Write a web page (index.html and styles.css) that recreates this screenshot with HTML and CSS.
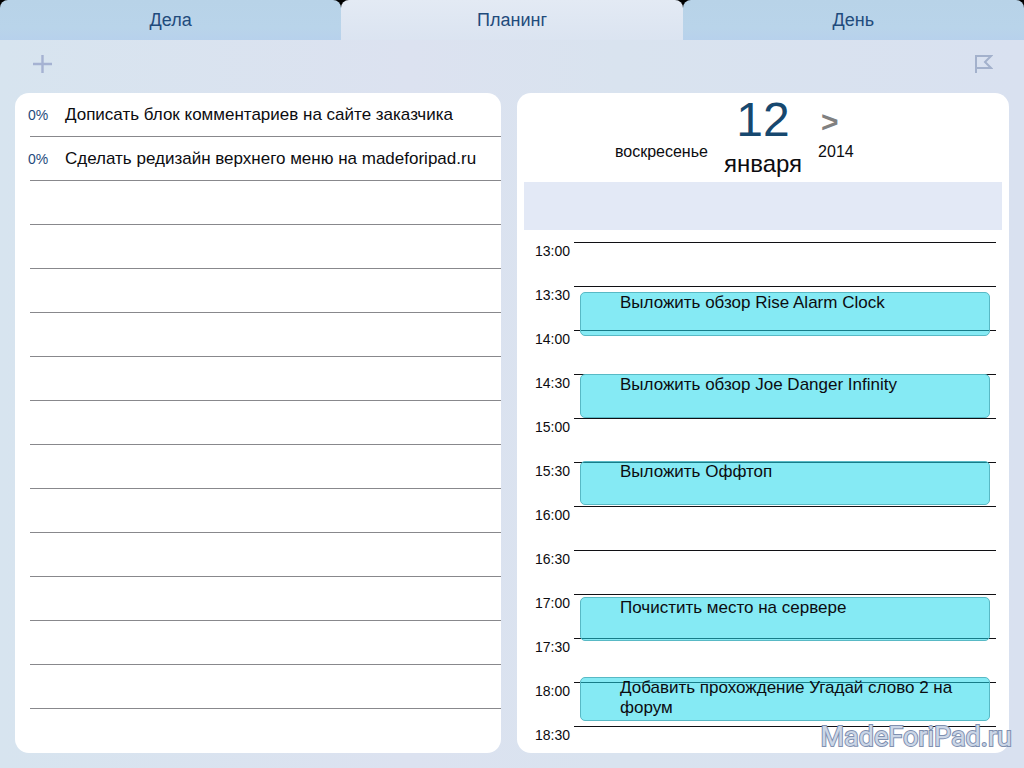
FILE: index.html
```html
<!DOCTYPE html>
<html lang="ru">
<head>
<meta charset="utf-8">
<meta name="viewport" content="width=device-width, initial-scale=1">
<title>Планинг</title>
<link rel="stylesheet" href="styles.css">
</head>
<body>
<div class="app">
  <nav class="tabs">
    <a class="tab" href="#tasks">Дела</a>
    <a class="tab tab-active" href="#planning" aria-current="page">Планинг</a>
    <a class="tab" href="#day">День</a>
  </nav>
  <div class="toolbar">
    <button class="tool" type="button" aria-label="Добавить">
      <svg width="20" height="20" viewBox="0 0 20 20"><path d="M10.5 1v18M1 10h19" fill="none" stroke="#a5b2d2" stroke-width="2.4"/></svg>
    </button>
    <button class="tool" type="button" aria-label="Флаг">
      <svg width="20" height="20" viewBox="0 0 20 20"><path d="M3 19V2h15l-6 6 6 6H3" fill="none" stroke="#a3b1cc" stroke-width="2"/></svg>
    </button>
  </div>
  <main class="panels">
    <section class="panel" aria-label="Список дел">
      <ul class="tasks">
        <li class="task"><span class="percent">0%</span><span>Дописать блок комментариев на сайте заказчика</span></li>
        <li class="task"><span class="percent">0%</span><span>Сделать редизайн верхнего меню на madeforipad.ru</span></li>
        <li class="task"></li>
        <li class="task"></li>
        <li class="task"></li>
        <li class="task"></li>
        <li class="task"></li>
        <li class="task"></li>
        <li class="task"></li>
        <li class="task"></li>
        <li class="task"></li>
        <li class="task"></li>
        <li class="task"></li>
        <li class="task"></li>
      </ul>
    </section>
    <section class="panel planner" aria-label="Расписание">
      <header class="date">
        <span class="weekday">воскресенье</span>
        <h1 class="day"><span class="number">12</span><span class="month">января</span></h1>
        <div class="side">
          <button class="next" type="button" aria-label="Следующий день">&gt;</button>
          <span class="year">2014</span>
        </div>
      </header>
      <div class="allday"></div>
      <div class="schedule">
        <div class="slot"><time class="time">13:00</time><span class="line"></span></div>
        <div class="slot"><time class="time">13:30</time><span class="line"></span></div>
        <div class="slot"><time class="time">14:00</time><span class="line"></span></div>
        <div class="slot"><time class="time">14:30</time><span class="line"></span></div>
        <div class="slot"><time class="time">15:00</time><span class="line"></span></div>
        <div class="slot"><time class="time">15:30</time><span class="line"></span></div>
        <div class="slot"><time class="time">16:00</time><span class="line"></span></div>
        <div class="slot"><time class="time">16:30</time><span class="line"></span></div>
        <div class="slot"><time class="time">17:00</time><span class="line"></span></div>
        <div class="slot"><time class="time">17:30</time><span class="line"></span></div>
        <div class="slot"><time class="time">18:00</time><span class="line"></span></div>
        <div class="slot slot-last"><time class="time">18:30</time><span class="line"></span></div>
        <div class="event" style="top:50px">Выложить обзор Rise Alarm Clock</div>
        <div class="event" style="top:132px">Выложить обзор Joe Danger Infinity</div>
        <div class="event" style="top:219px">Выложить Оффтоп</div>
        <div class="event" style="top:355px">Почистить место на сервере</div>
        <div class="event" style="top:435px">Добавить прохождение Угадай слово 2 на форум</div>
      </div>
    </section>
  </main>
  <div class="watermark">MadeForiPad.ru</div>
</div>
</body>
</html>
```
FILE: styles.css
```css
* {
  box-sizing: border-box;
}

body {
  margin: 0;
  background: #dae3f0;
  color: #0c0c10;
  font-family: "Liberation Sans", Arial, sans-serif;
  font-size: 17px;
  line-height: 20px;
}

.app {
  position: relative;
  display: flex;
  flex-direction: column;
  min-height: 100vh;
  background: linear-gradient(90deg, #d7e4ef, #dce2f0 40%, #d9e3ef 60%, #d9e1f0);
}

.tabs {
  display: grid;
  grid-template-columns: repeat(3, 1fr);
  background: linear-gradient(#000 12px, transparent 12px);
}

.tab {
  padding: 10px 0;
  border-radius: 8px 8px 0 0;
  background: linear-gradient(#b8d3e8, #b9d4ea 70%, #b7d1ec);
  color: #1f4b7c;
  font-size: 18px;
  text-align: center;
  text-decoration: none;
}

.tab-active {
  background: linear-gradient(#e3eaf4, #dbe4f1);
}

.tool,
.next {
  padding: 0;
  border: 0;
  background: none;
  cursor: pointer;
}

.toolbar {
  display: flex;
  justify-content: space-between;
  padding: 14px 31px 19px 32px;
}

.tool svg {
  display: block;
}

.panels {
  flex: 1;
  display: grid;
  grid-template-columns: 486fr 492fr;
  gap: 16px;
  padding: 0 15px 15px;
}

.panel {
  border-radius: 14px;
  background: #fff;
}

.tasks {
  margin: 0;
  padding: 0 0 0 15px;
  list-style: none;
}

.task {
  display: flex;
  align-items: center;
  height: 44px;
  border-bottom: 1px solid #88888c;
}

.percent {
  width: 37px;
  margin-left: -2px;
  color: #1f4b7c;
  font-size: 14px;
}

.planner {
  padding: 0 7px;
}

.date {
  display: grid;
  grid-template-columns: 1fr auto 1fr;
  gap: 16px;
  height: 89px;
}

.weekday {
  padding-top: 49px;
  font-size: 16px;
  text-align: right;
}

.day {
  display: flex;
  flex-direction: column;
  align-items: center;
  margin: 0;
  font-weight: 400;
}

.number {
  color: #17486f;
  font-size: 48px;
  line-height: 54px;
}

.month {
  padding-top: 4px;
  font-size: 24px;
  line-height: 26px;
}

.side {
  display: flex;
  flex-direction: column;
  align-items: flex-start;
  padding-top: 17px;
}

.next {
  padding-left: 3px;
  color: #808080;
  font: bold 30px/24px "Liberation Sans", Arial, sans-serif;
}

.year {
  padding-top: 8px;
  font-size: 16px;
}

.allday {
  height: 48px;
  background: #e3e9f6;
}

.schedule {
  position: relative;
  margin: 12px 6px 0 11px;
}

.slot {
  display: flex;
  align-items: flex-start;
  height: 44px;
}

.slot-last {
  height: 26px;
}

.time {
  width: 39px;
  font-size: 14px;
  line-height: 18px;
}

.line {
  flex: 1;
  border-top: 1px solid #101014;
}

/* Events float over the half-hour grid. */
.event {
  position: absolute;
  left: 45px;
  right: 6px;
  height: 44px;
  padding: 0 20px 0 39px;
  border: 1px solid #58b9c5;
  border-radius: 5px;
  background: rgba(30, 216, 235, 0.54);
}

.watermark {
  position: absolute;
  right: 12px;
  bottom: 14px;
  color: #cbd6e6;
  font-family: Roboto, sans-serif;
  font-size: 27px;
  line-height: 34px;
  -webkit-text-stroke: 2px #7f90b0;
  paint-order: stroke fill;
}
```
